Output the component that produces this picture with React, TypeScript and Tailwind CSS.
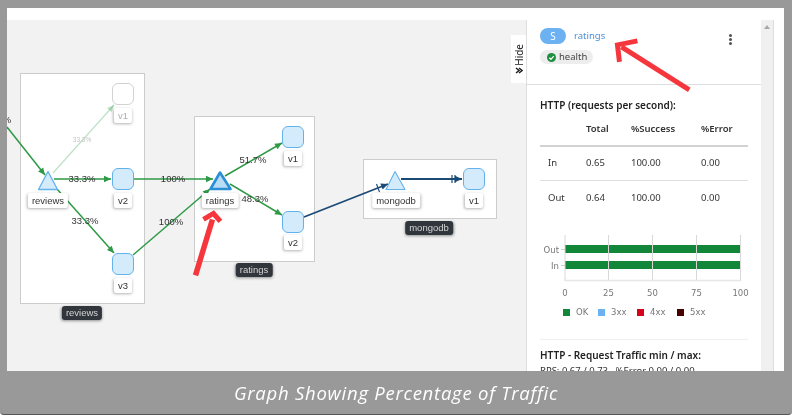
import React from 'react';

const GREEN = '#2d9a46';
const NAVY = '#1a4a75';

const edges = [
  { x1: 7, y1: 127, x2: 45, y2: 175, color: GREEN, w: 1.5, o: 1 },
  { x1: 53, y1: 173, x2: 114, y2: 105, color: '#2d9a46', w: 1.2, o: 0.3 },
  { x1: 54, y1: 179, x2: 111, y2: 179, color: GREEN, w: 1.5, o: 1 },
  { x1: 57, y1: 189, x2: 114, y2: 253, color: GREEN, w: 1.5, o: 1 },
  { x1: 134, y1: 179, x2: 213, y2: 179, color: GREEN, w: 1.5, o: 1 },
  { x1: 133, y1: 255, x2: 210, y2: 189, color: GREEN, w: 1.5, o: 1 },
  { x1: 225, y1: 176, x2: 282, y2: 143, color: GREEN, w: 1.5, o: 1 },
  { x1: 230, y1: 184, x2: 282, y2: 215, color: GREEN, w: 1.5, o: 1 },
  { x1: 304, y1: 217, x2: 388, y2: 184, color: NAVY, w: 1.8, o: 1 },
  { x1: 401, y1: 179, x2: 462, y2: 179, color: NAVY, w: 1.8, o: 1 },
];

const edgeLabels = [
  { x: -1, y: 120, t: '100%' },
  { x: 82, y: 179, t: '33.3%' },
  { x: 85, y: 221, t: '33.3%' },
  { x: 173, y: 179, t: '100%' },
  { x: 171, y: 222, t: '100%' },
  { x: 253, y: 160, t: '51.7%' },
  { x: 255, y: 199, t: '48.3%' },
];

function Arrowhead({ x1, y1, x2, y2, color, o }: { x1: number; y1: number; x2: number; y2: number; color: string; o: number }) {
  const a = Math.atan2(y2 - y1, x2 - x1);
  const l = 7;
  const s = 3.2;
  const bx = x2 - l * Math.cos(a);
  const by = y2 - l * Math.sin(a);
  const pts = [
    `${x2},${y2}`,
    `${bx - s * Math.sin(a)},${by + s * Math.cos(a)}`,
    `${bx + s * Math.sin(a)},${by - s * Math.cos(a)}`,
  ].join(' ');
  return <polygon points={pts} fill={color} opacity={o} />;
}

function Square({ className, faded }: { className: string; faded?: boolean }) {
  return (
    <div
      className={`absolute h-[22px] w-[22px] rounded-[6px] border ${
        faded ? 'border-[#d2d2d2] bg-white' : 'border-[#63b2ec] bg-[#d4ebfb]'
      } ${className}`}
    />
  );
}

function NodeLabel({ text, className, faded }: { text: string; className: string; faded?: boolean }) {
  return (
    <div
      className={`absolute h-[15px] -translate-x-1/2 rounded-[2px] bg-white px-[4px] font-['Liberation_Sans',sans-serif] text-[9.5px] leading-[15px] shadow-[0_1px_3px_rgba(0,0,0,0.3)] ${
        faded ? 'text-[#b0b0b0]' : 'text-[#333]'
      } ${className}`}
    >
      {text}
    </div>
  );
}

function GroupLabel({ text, className }: { text: string; className: string }) {
  return (
    <div
      className={`absolute h-[14px] -translate-x-1/2 rounded-[3px] bg-[#31363c] px-[4px] font-['Liberation_Sans',sans-serif] text-[9.5px] leading-[14px] text-[#d4d4d4] shadow-[0_1px_3px_rgba(0,0,0,0.4)] ${className}`}
    >
      {text}
    </div>
  );
}

function GraphCanvas() {
  return (
    <div className="relative h-[351px] w-[519px] shrink-0 overflow-hidden bg-[#f2f2f2]">
      <div className="absolute left-[13px] top-[53px] h-[231px] w-[125px] border border-[#ccc] bg-white" />
      <div className="absolute left-[187px] top-[96px] h-[146px] w-[121px] border border-[#ccc] bg-white" />
      <div className="absolute left-[356px] top-[139px] h-[60px] w-[134px] border border-[#ccc] bg-white" />

      <svg className="absolute inset-0 h-full w-full" viewBox="7 20 519 351">
        {edges.map((e, i) => (
          <g key={i}>
            <line x1={e.x1} y1={e.y1} x2={e.x2} y2={e.y2} stroke={e.color} strokeWidth={e.w} opacity={e.o} />
            <Arrowhead {...e} />
          </g>
        ))}
        <line x1="376.5" y1="184" x2="379.5" y2="192" stroke={NAVY} strokeWidth="1.2" />
        <line x1="452" y1="175" x2="452" y2="183" stroke={NAVY} strokeWidth="1.2" />
        <line x1="455" y1="175" x2="455" y2="183" stroke={NAVY} strokeWidth="1.2" />
        <polygon points="48,171.5 38.5,189.5 57.5,189.5" fill="#d4ebfb" stroke="#63b2ec" strokeWidth="1.3" strokeLinejoin="round" />
        <polygon points="220,172.5 210.5,189 230.5,189" fill="#b9dcf5" stroke="#2b8fd6" strokeWidth="2.6" strokeLinejoin="round" />
        <polygon points="395,171.5 386,189.5 405,189.5" fill="#d4ebfb" stroke="#63b2ec" strokeWidth="1.1" strokeLinejoin="round" />
        {edgeLabels.map(l => (
          <text key={l.t + l.x} x={l.x} y={l.y + 3.3} textAnchor="middle" fontSize="9.5" fill="#333" fontFamily="Liberation Sans, sans-serif">
            {l.t}
          </text>
        ))}
        <text x="82" y="142" textAnchor="middle" fontSize="6.5" fill="#c4c4c4" fontFamily="Liberation Sans, sans-serif">
          33.3%
        </text>
      </svg>

      <Square faded className="left-[105px] top-[63px]" />
      <Square className="left-[105px] top-[148px]" />
      <Square className="left-[105px] top-[233px]" />
      <Square className="left-[275px] top-[106px]" />
      <Square className="left-[275px] top-[191px]" />
      <Square className="left-[456px] top-[148px]" />

      <NodeLabel text="reviews" className="left-[41px] top-[173px]" />
      <NodeLabel text="v1" faded className="left-[116px] top-[88px]" />
      <NodeLabel text="v2" className="left-[116px] top-[173px]" />
      <NodeLabel text="v3" className="left-[116px] top-[258px]" />
      <NodeLabel text="ratings" className="left-[213px] top-[173px]" />
      <NodeLabel text="v1" className="left-[286px] top-[131px]" />
      <NodeLabel text="v2" className="left-[286px] top-[215px]" />
      <NodeLabel text="mongodb" className="left-[389px] top-[173px]" />
      <NodeLabel text="v1" className="left-[467px] top-[173px]" />

      <GroupLabel text="reviews" className="left-[75px] top-[286px]" />
      <GroupLabel text="ratings" className="left-[247px] top-[243px]" />
      <GroupLabel text="mongodb" className="left-[422px] top-[201px]" />

      <div className="absolute right-0 top-[15px] flex h-[48px] w-[15px] flex-col items-center justify-center gap-[2px] bg-white">
        <span className="rotate-180 text-[10px] leading-none text-[#222] [writing-mode:vertical-rl]">Hide</span>
        <svg width="8" height="7" viewBox="0 0 8 7">
          <path d="M1 1 4 3.5 1 6M4 1 7 3.5 4 6" fill="none" stroke="#222" strokeWidth="1.5" />
        </svg>
      </div>
    </div>
  );
}

function TrafficChart() {
  const ticks = [
    { x: 565, t: '0' },
    { x: 608.5, t: '25' },
    { x: 652.5, t: '50' },
    { x: 696.5, t: '75' },
    { x: 740.5, t: '100' },
  ];
  return (
    <svg className="block h-[67px] w-[235px]" viewBox="527 235 235 67">
      <rect x="565" y="245" width="176" height="8" fill="#12873a" />
      <rect x="565" y="261" width="176" height="8" fill="#12873a" />
      {ticks.map(t => (
        <g key={t.t}>
          <line x1={t.x} y1="235" x2={t.x} y2="281" stroke="#d8d8d8" strokeWidth="1" />
          <text x={t.x} y="296" textAnchor="middle" fontSize="8.5" fill="#777" fontFamily="DejaVu Sans, sans-serif">
            {t.t}
          </text>
        </g>
      ))}
      <line x1="565" y1="280.5" x2="741" y2="280.5" stroke="#e6e6e6" strokeWidth="1.5" />
      <line x1="561" y1="249.5" x2="565" y2="249.5" stroke="#ccc" />
      <line x1="561" y1="265.5" x2="565" y2="265.5" stroke="#ccc" />
      <text x="559" y="253" textAnchor="end" fontSize="8.5" fill="#777" fontFamily="DejaVu Sans, sans-serif">Out</text>
      <text x="559" y="269" textAnchor="end" fontSize="8.5" fill="#777" fontFamily="DejaVu Sans, sans-serif">In</text>
    </svg>
  );
}

function SidePanel() {
  const rows = [
    { dir: 'In', total: '0.65', ok: '100.00', err: '0.00' },
    { dir: 'Out', total: '0.64', ok: '100.00', err: '0.00' },
  ];
  const legend = [
    { c: 'bg-[#12873a]', t: 'OK', w: 'w-[35px]' },
    { c: 'bg-[#6cb1f2]', t: '3xx', w: 'w-[39px]' },
    { c: 'bg-[#d6001c]', t: '4xx', w: 'w-[40px]' },
    { c: 'bg-[#470000]', t: '5xx', w: 'w-[40px]' },
  ];
  return (
    <div className="flex h-[351px] w-[248px] shrink-0 border-x border-[#dedede] bg-white">
      <div className="h-full w-[234px] shrink-0 overflow-hidden">
        <div className="flex h-[65px] justify-between border-b border-[#dedede] pl-[13px] pr-[29px] pt-[8px]">
          <div>
            <div className="flex items-center gap-[8px]">
              <span className="flex h-[16px] w-[26px] items-center justify-center rounded-full bg-[#6cb1f2] text-[10px] text-white">S</span>
              <span className="text-[9.5px] text-[#4c8fd6]">ratings</span>
            </div>
            <div className="mt-[6px] flex h-[14px] w-[53px] items-center gap-[3px] rounded-full bg-[#ededed] pl-[7px] text-[9.5px] text-[#444]">
              <svg width="9" height="9" viewBox="0 0 10 10" className="shrink-0">
                <circle cx="5" cy="5" r="5" fill="#1e8f3e" />
                <path d="M2.6 5.2 4.4 7 7.5 3.5" fill="none" stroke="#fff" strokeWidth="1.4" />
              </svg>
              health
            </div>
          </div>
          <div className="mt-[6px] flex flex-col gap-[1px]">
            <span className="h-[3px] w-[3px] rounded-full bg-[#555]" />
            <span className="h-[3px] w-[3px] rounded-full bg-[#555]" />
            <span className="h-[3px] w-[3px] rounded-full bg-[#555]" />
          </div>
        </div>

        <div className="px-[13px] pt-[14px] text-[#333]">
          <div className="text-[10px] font-semibold leading-[13px] text-[#222]">HTTP (requests per second):</div>
          <div className="mt-[11px] grid h-[24px] grid-cols-[46px_45px_70px_48px] border-b-2 border-[#d2d2d2] text-[9.5px] font-semibold leading-[12px]">
            <span />
            <span>Total</span>
            <span>%Success</span>
            <span>%Error</span>
          </div>
          {rows.map((r, i) => (
            <div
              key={r.dir}
              className={`grid h-[34px] grid-cols-[46px_45px_70px_48px] items-center text-[9.5px] ${i === 0 ? 'border-b border-[#dedede]' : ''}`}
            >
              <span className="pl-[8px]">{r.dir}</span>
              <span>{r.total}</span>
              <span>{r.ok}</span>
              <span>{r.err}</span>
            </div>
          ))}
        </div>

        <div className="mt-[20px]">
          <TrafficChart />
          <div className="ml-[36px] mt-[4px] flex items-center font-['DejaVu_Sans',sans-serif] text-[8.5px] text-[#777]">
            {legend.map(l => (
              <div key={l.t} className={`flex items-center gap-[6px] ${l.w}`}>
                <span className={`h-[7px] w-[7px] ${l.c}`} />
                {l.t}
              </div>
            ))}
          </div>
        </div>

        <div className="mx-[13px] mt-[20px] border-t border-[#efefef] pt-[9px]">
          <div className="text-[10px] font-semibold leading-[13px] text-[#222]">HTTP - Request Traffic min / max:</div>
          <div className="mt-[2px] text-[9.5px] leading-[13px] text-[#333]">RPS: 0.67 / 0.73 , %Error 0.00 / 0.00</div>
        </div>
      </div>
      <div className="flex h-full flex-1 justify-center bg-[#f0f0f0] pt-[5px]">
        <div className="h-0 w-0 border-x-[3.5px] border-b-[4px] border-x-transparent border-b-[#a8a8a8]" />
      </div>
    </div>
  );
}

export default function App() {
  return (
    <div className="relative h-[415px] w-[792px] overflow-hidden rounded-b-[4px] border-b border-[#555] bg-[#999] font-['Noto_Sans',sans-serif] blur-[0.4px]">
      <div className="ml-[7px] mt-[8px] w-[777px] bg-white pt-[12px]">
        <div className="flex">
          <GraphCanvas />
          <SidePanel />
        </div>
      </div>

      <div className="flex h-[43px] items-center justify-center font-['Open_Sans',sans-serif] text-[18.5px] italic tracking-[0.75px] text-white">
        Graph Showing Percentage of Traffic
      </div>

      <svg className="pointer-events-none absolute inset-0 h-full w-full" viewBox="0 0 792 415">
        <line x1="195" y1="276" x2="212" y2="220" stroke="#f5363c" strokeWidth="5.5" />
        <polyline points="203,220 213,214 220,222" fill="none" stroke="#f5363c" strokeWidth="5" />
        <line x1="690" y1="90" x2="622" y2="47" stroke="#f5363c" strokeWidth="5" />
        <polyline points="638,41 618,45 620,62" fill="none" stroke="#f5363c" strokeWidth="5" />
      </svg>
    </div>
  );
}
